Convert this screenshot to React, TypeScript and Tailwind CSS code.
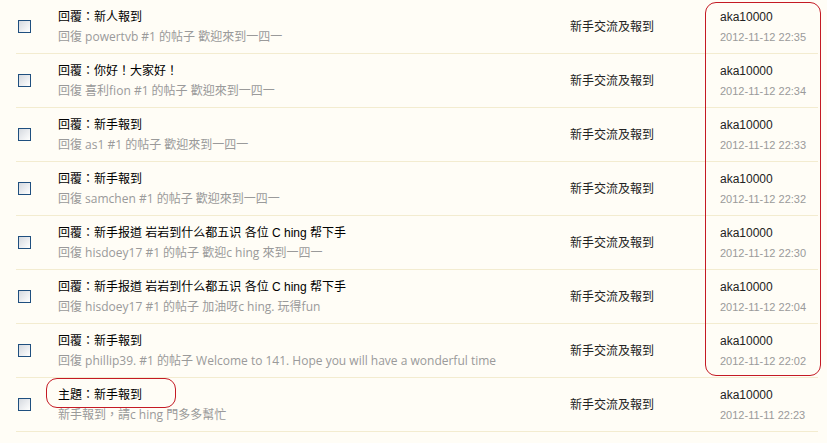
const rows = [
  { title: '回覆：新人報到', sub: '回復 powertvb #1 的帖子 歡迎來到一四一', time: '2012-11-12 22:35' },
  { title: '回覆：你好！大家好！', sub: '回復 喜利fion #1 的帖子 歡迎來到一四一', time: '2012-11-12 22:34' },
  { title: '回覆：新手報到', sub: '回復 as1 #1 的帖子 歡迎來到一四一', time: '2012-11-12 22:33' },
  { title: '回覆：新手報到', sub: '回復 samchen #1 的帖子 歡迎來到一四一', time: '2012-11-12 22:32' },
  { title: '回覆：新手报道 岩岩到什么都五识 各位 C hing 帮下手', sub: '回復 hisdoey17 #1 的帖子 歡迎c hing 來到一四一', time: '2012-11-12 22:30' },
  { title: '回覆：新手报道 岩岩到什么都五识 各位 C hing 帮下手', sub: '回復 hisdoey17 #1 的帖子 加油呀c hing. 玩得fun', time: '2012-11-12 22:04' },
  { title: '回覆：新手報到', sub: '回復 phillip39. #1 的帖子 Welcome to 141. Hope you will have a wonderful time', time: '2012-11-12 22:02' },
  { title: '主題：新手報到', sub: '新手報到，請c hing 門多多幫忙', time: '2012-11-11 22:23' },
];

export default function App() {
  return (
    <div
      className="relative h-[443px] w-[827px] overflow-hidden bg-[#fffdf6] text-[12px]"
      style={{ fontFamily: '"Liberation Sans", "Noto Sans CJK TC", sans-serif' }}
    >
      <div className="ml-[16px] w-[802px]">
        {rows.map((r, i) => (
          <div key={i} className="flex h-[54px] items-center border-b border-[#f3ecd0]">
            <div className="w-[42px] shrink-0 pl-[2px]">
              <div className="h-[13px] w-[13px] border border-[#1f4f7f] bg-gradient-to-br from-[#d5d9df] to-[#ffffff]" />
            </div>
            <div className="flex w-[512px] shrink-0 flex-col pt-[1px]">
              <div className="leading-[20px] text-black">{r.title}</div>
              <div
                className="leading-[20px] text-[#9a9a9a]"
                style={{ fontFamily: '"Open Sans", "Noto Sans CJK TC", sans-serif' }}
              >
                {r.sub}
              </div>
            </div>
            <div className="w-[150px] shrink-0 text-[#222]">新手交流及報到</div>
            <div className="flex flex-col pt-[1px]">
              <div className="leading-[20px] text-[#222]">aka10000</div>
              <div className="text-[11px] leading-[20px] text-[#9a9a9a]">{r.time}</div>
            </div>
          </div>
        ))}
      </div>
      <div className="pointer-events-none absolute left-[705px] top-[2px] h-[374px] w-[116px] rounded-[11px] border-[1.5px] border-[#c41a24]" />
      <div className="pointer-events-none absolute left-[46px] top-[378px] h-[30px] w-[130px] rounded-[11px] border-[1.5px] border-[#c41a24]" />
    </div>
  );
}
